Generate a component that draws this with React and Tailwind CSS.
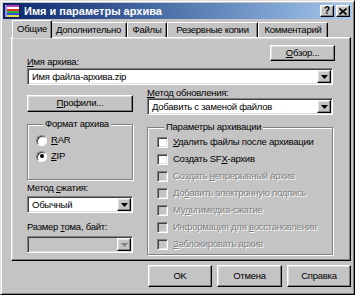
import React from 'react'

const raised = 'border border-t-white border-l-white border-b-black border-r-black shadow-[inset_-1px_-1px_0_#808080,inset_1px_1px_0_#dfdfdf]'
const sunken = 'border border-t-[#808080] border-l-[#808080] border-b-white border-r-white shadow-[inset_1px_1px_0_#404040,inset_-1px_-1px_0_#dfdfdf]'
const disabledText = 'text-[#808080] [text-shadow:1px_1px_0_#fff]'

const TABS = [
  { label: 'Общие', w: 'w-[40px]', active: true },
  { label: 'Дополнительно', w: 'w-[77px]' },
  { label: 'Файлы', w: 'w-[40px]' },
  { label: 'Резервные копии', w: 'w-[91px]' },
  { label: 'Комментарий', w: 'w-[70px]' },
]

const OPTIONS = [
  { text: <><u>У</u>далить файлы после архивации</> },
  { text: <>Создать SF<u>X</u>-архив</> },
  { text: <>Создать <u>н</u>епрерывный архив</>, disabled: true },
  { text: <>До<u>б</u>авить электронную подпись</>, disabled: true },
  { text: <>Му<u>л</u>ьтимедиа-сжатие</>, disabled: true },
  { text: <>Информация для <u>в</u>осстановления</>, disabled: true },
  { text: <><u>З</u>аблокировать архив</>, disabled: true },
]

function Arrow({ disabled }) {
  return (
    <div className={`w-[14px] h-full ${raised} bg-[#c4c4c4] flex items-center justify-center`}>
      <svg width="7" height="4" viewBox="0 0 7 4">
        <path d="M0 0h7L3.5 4z" fill={disabled ? '#808080' : '#000'} />
      </svg>
    </div>
  )
}

function Combo({ value, disabled, className = '' }) {
  return (
    <div className={`h-[17px] ${sunken} ${disabled ? 'bg-[#c4c4c4]' : 'bg-white'} flex items-stretch p-[1px] ${className}`}>
      <span className="flex-1 pl-[3px] leading-[13px] truncate">{value}</span>
      <Arrow disabled={disabled} />
    </div>
  )
}

function Button({ children, className = '' }) {
  return (
    <div className={`${raised} bg-[#c4c4c4] flex items-center justify-center ${className}`}>
      {children}
    </div>
  )
}

function Radio({ checked, children }) {
  return (
    <div className="h-[16px] flex items-center gap-[4px]">
      <div className="w-[11px] h-[11px] rounded-full border border-t-[#808080] border-l-[#808080] border-b-white border-r-white shadow-[inset_1px_1px_0_#404040] bg-white flex items-center justify-center">
        {checked && <div className="w-[4px] h-[4px] rounded-full bg-black" />}
      </div>
      <span>{children}</span>
    </div>
  )
}

function Check({ disabled, children }) {
  return (
    <div className="h-[17px] flex items-center gap-[5px]">
      <div className={`w-[11px] h-[11px] ${sunken} ${disabled ? 'bg-[#c4c4c4]' : 'bg-white'}`} />
      <span className={disabled ? disabledText : ''}>{children}</span>
    </div>
  )
}

function Group({ title, className = '', children }) {
  return (
    <fieldset className={`border border-[#808080] shadow-[inset_1px_1px_0_#fff,1px_1px_0_#fff] ${className}`}>
      <legend className="ml-[7px] px-[2px] leading-[12px] bg-[#c4c4c4]">{title}</legend>
      {children}
    </fieldset>
  )
}

export default function App() {
  return (
    <div className="w-[363px] h-[297px] bg-white font-['Liberation_Sans',Arial,sans-serif] text-[9.5px] tracking-[-0.25px] text-black">
      <div className="w-[355px] h-[295px] bg-[#c4c4c4] border border-t-[#dfdfdf] border-l-[#dfdfdf] border-b-black border-r-black shadow-[inset_1px_1px_0_#fff,inset_-1px_-1px_0_#808080] p-[2px] flex flex-col">
        {/* Title bar */}
        <div className="h-[16px] bg-linear-to-r from-[#0a246a] to-[#a6caf0] flex items-center pl-[1px] pr-[2px]">
          <svg width="16" height="14" viewBox="0 0 16 14" className="shrink-0">
            <rect x="0" y="0" width="16" height="14" fill="#1a1a60" />
            <rect x="3" y="1" width="12" height="2" fill="#b040c0" />
            <rect x="3" y="3" width="12" height="2" fill="#ffffff" />
            <rect x="3" y="5" width="12" height="2" fill="#e03030" />
            <rect x="3" y="7" width="12" height="2" fill="#30b030" />
            <rect x="3" y="9" width="12" height="2" fill="#3050e0" />
            <rect x="3" y="11" width="12" height="2" fill="#e0e040" />
            <rect x="1" y="1" width="2" height="12" fill="#9090ff" />
          </svg>
          <span className="ml-[4px] text-white font-bold text-[11px] tracking-normal leading-[14px]">Имя и параметры архива</span>
          <div className="ml-auto flex gap-[2px]">
            <Button className="w-[14px] h-[12px] font-bold text-[10px] leading-none">?</Button>
            <Button className="w-[14px] h-[12px]">
              <svg width="8" height="7" viewBox="0 0 8 7">
                <path d="M0.5 0.5L7.5 6.5M7.5 0.5L0.5 6.5" stroke="#000" strokeWidth="1.6" />
              </svg>
            </Button>
          </div>
        </div>

        {/* Tabs */}
        <div className="mt-[1px] ml-[11px] h-[17px] flex items-end relative z-10">
          {TABS.map(t => (
            <div
              key={t.label}
              className={`${t.w} border-t border-l border-r border-t-white border-l-white border-r-black shadow-[inset_-1px_0_0_#808080] rounded-t-[2px] bg-[#c4c4c4] flex items-center justify-center ${
                t.active ? 'h-[18px] -mb-[1px] -mx-[2px] px-[2px] z-10' : 'h-[15px]'
              }`}
            >
              {t.label}
            </div>
          ))}
        </div>

        {/* Panel */}
        <div className={`ml-[8px] w-[340px] h-[224px] ${raised} pl-[15px] pr-[17px] flex flex-col`}>
          <div className="mt-[7px] h-[22px] flex justify-between">
            <span className="self-end leading-[11px]"><u>И</u>мя архива:</span>
            <Button className="w-[65px] h-[16px] -mr-[2px]"><span><u>О</u>бзор...</span></Button>
          </div>
          <Combo value="Имя файла-архива.zip" className="mt-[1px]" />

          <div className="flex gap-[14px]">
            {/* Left column */}
            <div className="w-[106px] flex flex-col">
              <Button className="mt-[10px] h-[17px]"><span><u>П</u>рофили...</span></Button>
              <Group title="Формат архива" className="mt-[6px] h-[62px] pl-[8px] pt-[2px]">
                <Radio><u>R</u>AR</Radio>
                <Radio checked><u>Z</u>IP</Radio>
              </Group>
              <span className="mt-[2px] leading-[12px]">Метод <u>с</u>жатия:</span>
              <Combo value="Обычный" className="mt-[2px]" />
              <span className="mt-[8px] leading-[12px]">Размер <u>т</u>ома, байт:</span>
              <Combo value="" disabled className="mt-[3px]" />
            </div>

            {/* Right column */}
            <div className="flex-1 flex flex-col">
              <span className="mt-[2px] leading-[11px]"><u>М</u>етод обновления:</span>
              <Combo value="Добавить с заменой файлов" />
              <Group title="Параметры архивации" className="mt-[6px] h-[134px] pl-[9px] pt-[1px]">
                {OPTIONS.map((o, i) => (
                  <Check key={i} disabled={o.disabled}>{o.text}</Check>
                ))}
              </Group>
            </div>
          </div>
        </div>

        {/* Buttons */}
        <div className="mt-[4px] flex justify-end gap-[5px] pr-[1px]">
          <Button className="w-[64px] h-[22px]">OK</Button>
          <Button className="w-[65px] h-[22px]">Отмена</Button>
          <Button className="w-[64px] h-[22px]">Справка</Button>
        </div>
      </div>
    </div>
  )
}
